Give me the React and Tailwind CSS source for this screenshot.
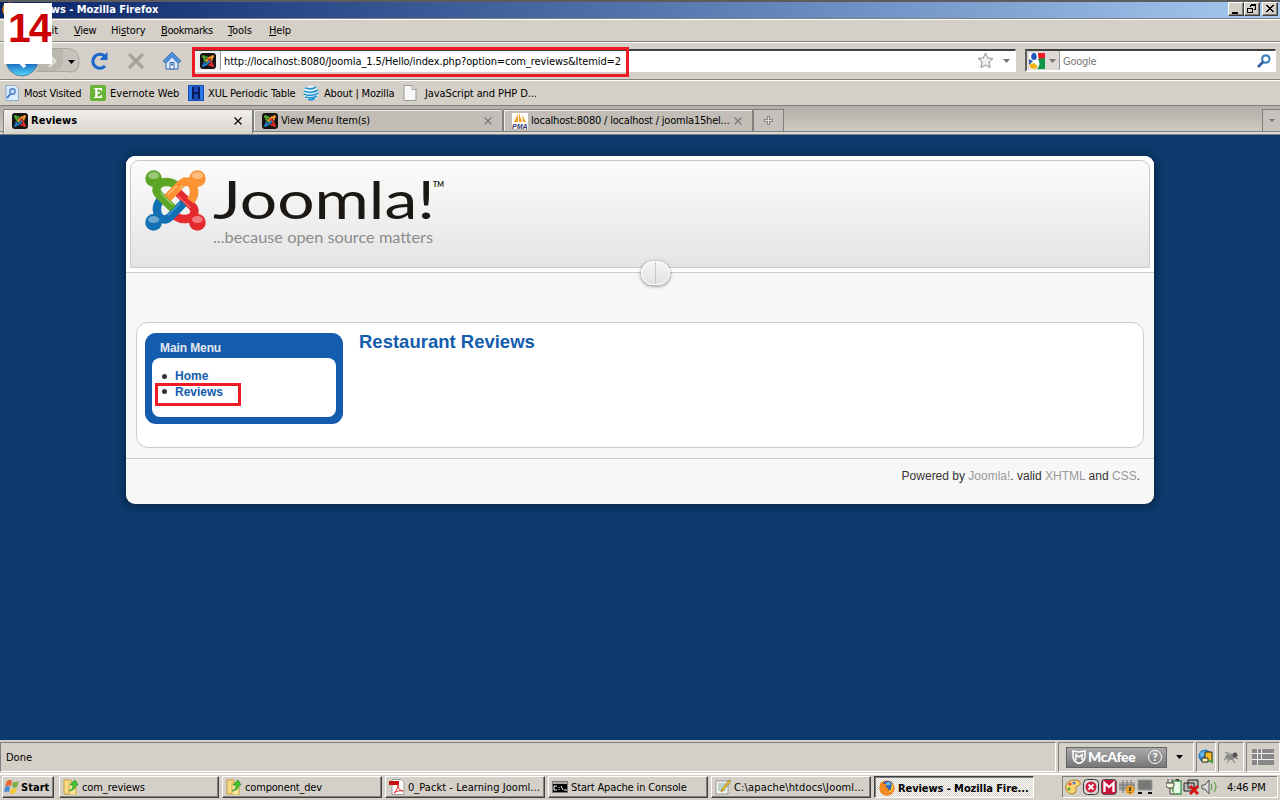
import React from "react";

const UI = "font-['DejaVu_Sans_Condensed','DejaVu_Sans',sans-serif] text-[11px] leading-[14px] text-black whitespace-nowrap";

function JoomlaMark({ className }) {
  const arm = "M31 15.500 L29 14 C23 10 11.500 12 11.500 19.500 C11.500 22.500 12.500 23.500 14.500 25.500 L28 38.500";
  const rot = ["rotate(180 30.500 30.500)", "rotate(270 30.500 30.500)", "rotate(0)", "rotate(90 30.500 30.500)"];
  const color = ["#e52a2e", "#1271b5", "#5ba626", "#fb9333"];
  const light = ["#f4625f", "#3f97d2", "#8ecb5e", "#ffbd78"];
  return (
    <svg viewBox="0 0 61 61" className={className}>
      {color.map((c, i) => (
        <g key={c} transform={rot[i]}>
          <path d="M8 8 L14 14" stroke={c} strokeWidth="10" />
          <path d={arm} fill="none" stroke={c} strokeWidth="8.500" />
          <path d="M15.500 23 L28 35" fill="none" stroke={light[i]} strokeWidth="1.500" />
          <circle cx="8.600" cy="8.600" r="8.300" fill={c} />
        </g>
      ))}
      <path d="M22.500 28 L33 17.500" stroke="#fb9333" strokeWidth="8.500" />
      <path d="M23 24.500 L32 15.500" stroke="#ffbd78" strokeWidth="1.500" />
      {[[8.6, 5.5], [52.4, 5.5], [8.6, 49.5], [52.4, 49.5]].map(([x, y]) => (
        <ellipse key={x + "-" + y} cx={x} cy={y} rx="5.500" ry="3.600" fill="#fff" opacity=".38" />
      ))}
    </svg>
  );
}

function JoomlaFavicon() {
  return (
    <svg viewBox="0 0 16 16" className="size-4 shrink-0">
      <rect width="16" height="16" rx="3" fill="#151515" />
      <g fill="none" strokeWidth="2">
        <path d="M7.500 4.500C5 3.500 4 5 4.300 6.200L8 10" stroke="#54a82a" />
        <path d="M11.500 7.500C12.500 5 11 4 9.800 4.300L6 8" stroke="#f79a2c" />
        <path d="M8.500 11.500C11 12.500 12 11 11.700 9.800L8 6" stroke="#e62c2c" />
        <path d="M4.500 8.500C3.500 11 5 12 6.200 11.700L10 8" stroke="#2377c4" />
      </g>
      <circle cx="3.500" cy="3.500" r="1.500" fill="#54a82a" />
      <circle cx="12.500" cy="3.500" r="1.500" fill="#f79a2c" />
      <circle cx="12.500" cy="12.500" r="1.500" fill="#e62c2c" />
      <circle cx="3.500" cy="12.500" r="1.500" fill="#2377c4" />
    </svg>
  );
}

function FirefoxIcon() {
  return (
    <svg viewBox="0 0 16 16" className="size-4 shrink-0">
      <circle cx="8" cy="8" r="7.500" fill="#e2651b" />
      <circle cx="8.800" cy="6.500" r="5.500" fill="#2d62b5" />
      <path d="M7 2.500c2-1 4-.5 5 1l-2 2-3-.5z" fill="#6fb4e8" />
      <path d="M1 4C2 3 2 2 2.500 1.500L5 4l3 .5L6.500 7l3 1.500C8 10.500 11 11 13 8c0-3 0-4-1-5 3 1.500 4 5 3 8-2 4-6 5.500-10 4S0 9 1 4z" fill="#f18a20" />
      <path d="M12.500 3c2 2 2 5 .5 7-1 2-3 2.500-5 2.500 3-.5 5-3 4.500-9.500z" fill="#fdd33c" />
    </svg>
  );
}

function Arrow({ className = "" }) {
  return <svg viewBox="0 0 7 4" className={"h-[4px] w-[7px] shrink-0 " + className}><path d="M0 0h7L3.500 4z" fill="currentColor" /></svg>;
}

function CloseX({ className }) {
  return <svg viewBox="0 0 8 8" className={"size-2 shrink-0 " + className}><path d="M.5.5l7 7M7.500.5l-7 7" stroke="currentColor" strokeWidth="1.150" /></svg>;
}

function WinButton({ children, className = "" }) {
  return <div className={"h-[14px] w-4 border border-t-white border-l-white border-r-[#404040] border-b-[#404040] bg-[#d4d0c8] shadow-[inset_-1px_-1px_#808080] " + className}><svg viewBox="0 0 14 12" className="h-3 w-[14px]" shapeRendering="crispEdges">{children}</svg></div>;
}

function TitleBar() {
  return (
    <div className="flex h-[18px] shrink-0 border-t-2 border-t-[#5c5c5c] bg-linear-to-r from-[#0a246a] to-[#a6caf0] pr-[2px]">
      <div className="w-4 shrink-0"><div className="ml-[2px] w-4"><FirefoxIcon /></div></div>
      <div className="flex-1 pt-px pl-1 font-['DejaVu_Sans_Condensed','DejaVu_Sans',sans-serif] text-[11px] leading-[13px] font-bold tracking-[-0.02px] whitespace-nowrap text-white">Reviews - Mozilla Firefox</div>
      <WinButton><path d="M3 9h6v2H3z" /></WinButton>
      <WinButton className="mr-[2px]">
        <path d="M5.500 1.500h5v5h-2M5.500 1.500v2M5 2.500h6M2.500 5.500h5v4h-5zM2 5.500h6" fill="none" stroke="#000" />
      </WinButton>
      <WinButton><path d="M3 2h2v1h1v1h2V3h1V2h2v1h-1v1H9v1H8v1h1v1h1v1h1v1H9V8H8V7H6v1H5v1H3V8h1V7h1V6h1V5H5V4H4V3H3z" /></WinButton>
    </div>
  );
}

function MenuBar() {
  return (
    <div className={UI + " flex h-[24px] shrink-0 items-center border-t border-b border-t-[#808080] border-b-[#808080] pt-[2px] pl-[39px] shadow-[inset_0_1px_#fff]"}>
      <span className="w-[35px]"><u>E</u>dit</span>
      <span className="w-[37px] tracking-[-0.3px]"><u>V</u>iew</span>
      <span className="w-[50px] tracking-[-0.1px]">Hi<u>s</u>tory</span>
      <span className="w-[67px] tracking-[-0.4px]"><u>B</u>ookmarks</span>
      <span className="w-[41px] tracking-[-0.1px]"><u>T</u>ools</span>
      <span className="tracking-[-0.2px]"><u>H</u>elp</span>
    </div>
  );
}

function GoogleIcon() {
  return (
    <svg viewBox="0 0 16 16" className="size-4 shrink-0">
      <rect width="16" height="16" fill="#fff" />
      <path d="M9 0h7v6H9z" fill="#ed1c24" /><path d="M9 6l7-1v11H8c3-3 3-6 1-10z" fill="#119547" />
      <path d="M0 6l4 2-4 4z" fill="#2a61bd" /><ellipse cx="5" cy="3.500" rx="2.800" ry="3.500" fill="#1d5abb" />
      <ellipse cx="4.500" cy="13" rx="4" ry="2.700" fill="#f4b315" /><path d="M8 0l1 6M6 9l2 3" stroke="#fff" strokeWidth="1.500" />
    </svg>
  );
}

function NavBar() {
  return (
    <div className="flex h-[38px] shrink-0 items-center border-b border-b-[#808080] shadow-[inset_0_1px_#fff]">
      <svg viewBox="0 0 82 36" className="h-9 w-[82px] shrink-0">
        <defs><linearGradient id="back" x2="0" y2="1"><stop stopColor="#3477bd" /><stop offset=".6" stopColor="#1769bd" /><stop offset="1" stopColor="#58dbff" /></linearGradient></defs>
        <path d="M12 5.500h55q12 0 12 13t-12 10H36" fill="#c8c4bd" stroke="#aaa69e" />
        <path d="M38 28h13q10 0 12-8V6H38z" fill="#b3b0ab" opacity=".7" />
        <circle cx="22" cy="17" r="16" fill="url(#back)" stroke="#58708a" strokeWidth=".8" />
        <path d="M25 11l-7 6 7 7" fill="none" stroke="#fff" strokeWidth="3.500" /><path d="M49 12l6 6-6 6" fill="none" stroke="#dedbd5" strokeWidth="3" />
        <path d="M68 17h7l-3.500 4z" fill="#000" />
      </svg>
      <svg viewBox="0 0 20 20" className="ml-2 size-5 shrink-0"><path d="M15 15A7 7 0 1 1 14.500 5" fill="none" stroke="#1b67ca" strokeWidth="3.200" /><path d="M17.500 1v8H9.500z" fill="#1b67ca" /></svg>
      <svg viewBox="0 0 18 18" className="ml-[17px] size-[18px] shrink-0"><path d="M2 2l14 14M16 2L2 16" stroke="#a5a29d" strokeWidth="3.200" /></svg>
      <svg viewBox="0 0 18 18" className="ml-[18px] size-[18px] shrink-0"><path d="M3 9v8h12V9L9 3z" fill="#dcecff" stroke="#3569ac" /><path d="M9 0L18 9l-1.500 1.500H14L9 5l-5 5.500H1.500L0 9z" fill="#4e8edb" stroke="#3566a5" strokeWidth=".7" /><path d="M7 10.500h4V17H7z" fill="#fff" stroke="#3569ac" /><path d="M8 11.500h2v2H8z" fill="#3569ac" /></svg>
      <div className={UI + " ml-[12px] flex h-[23px] w-[823px] shrink-0 items-center border-t-2 border-l border-b-2 border-r border-t-[#404040] border-l-[#808080] border-r-white border-b-white bg-white"}>
        <div className="flex h-full w-[27px] items-center border-r border-[#999] bg-[#f0efed] pl-[6px]"><JoomlaFavicon /></div>
        <span className="flex-1 pt-[2px] pl-[3px] tracking-[-0.095px]">http://localhost:8080/Joomla_1.5/Hello/index.php?option=com_reviews&amp;Itemid=2</span>
        <svg viewBox="0 0 17 17" className="size-[17px]"><path d="M8.500 1l2.200 5 5.300.5-4 3.500 1.200 5.500-4.700-2.300-4.700 2.300L5 10 1 6.500 6.300 6z" fill="#eee" stroke="#8f8f8f" /></svg>
        <Arrow className="mr-[5px] ml-[9px] text-[#777]" />
      </div>
      <div className={UI + " ml-[9px] flex h-[23px] w-[251px] shrink-0 items-center border-t-2 border-l-2 border-b-2 border-r border-t-[#404040] border-l-[#606060] border-r-white border-b-white bg-white"}>
        <div className="flex h-full w-[33px] items-center gap-1 border-r border-[#999] bg-[#dedbd6] pl-[2px]"><GoogleIcon /><Arrow className="text-[#777]" /></div>
        <span className="flex-1 pt-[2px] pl-[3px] tracking-[-0.25px] text-[#777]">Google</span>
        <svg viewBox="0 0 14 14" className="mr-1 size-[14px]"><circle cx="8.800" cy="5" r="3.700" fill="#fff" stroke="#3d7fbb" strokeWidth="2.200" /><path d="M6 8L1 13" stroke="#315f9e" strokeWidth="2.700" /></svg>
      </div>
    </div>
  );
}

function Bookmarks() {
  return (
    <div className={UI + " flex h-[26px] shrink-0 items-center border-b border-b-[#808080] pl-1 shadow-[inset_0_1px_#fff]"}>
      <svg viewBox="0 0 16 16" className="size-4"><path d="M2 .5h9L14.500 4v11.500H2z" fill="#dcecff" stroke="#8dacd2" /><circle cx="8.500" cy="6.500" r="2.700" fill="#c2dbfa" stroke="#4d83c4" strokeWidth="1.400" /><path d="M6.500 9L3 13" stroke="#4d83c4" strokeWidth="2" /></svg>
      <span className="ml-1 w-[66px] pt-[2px] tracking-[-0.25px]">Most Visited</span>
      <svg viewBox="0 0 16 16" className="size-4"><rect width="16" height="16" rx="2" fill="#68b536" /><path d="M4 3h8v3h-1L10 4.500H7.500V7H10v1.500H7.500v3H10l1-1.500h1v3H4v-1h1.200V4H4z" fill="#fff" /></svg>
      <span className="ml-1 w-[78px] pt-[2px] tracking-[0.03px]">Evernote Web</span>
      <svg viewBox="0 0 16 16" className="size-4"><path d="M0 0h16v16H0z" fill="#1c49b8" /><path d="M1 1h4v14H1zM11 1h4v14h-4z" fill="#2a78e4" /><path d="M5 2v12M11 2v12M5 8h6" stroke="#061a5c" strokeWidth="2" /></svg>
      <span className="ml-1 w-[95px] pt-[2px] tracking-[-0.15px]">XUL Periodic Table</span>
      <svg viewBox="0 0 16 16" className="size-4"><circle cx="8" cy="8" r="7.500" fill="#e9f5fb" /><path d="M2 3q7 2 11-1M1 6q8 3 14-1M.5 9q8 3 15-1M2 12q7 2 12-1M5 14.500q4 1 7-1" fill="none" stroke="#2796cd" strokeWidth="1.700" /></svg>
      <span className="ml-[5px] w-[78px] pt-[2px] tracking-[-0.17px]">About | Mozilla</span>
      <svg viewBox="0 0 16 16" className="size-4"><path d="M2 .5h8L14 4.500v11H2z" fill="#f8f8f8" stroke="#999" /><path d="M10 .5v4h4" fill="#ddd" stroke="#aaa" /></svg>
      <span className="ml-[7px] pt-[2px] tracking-[-0.1px]">JavaScript and PHP D...</span>
    </div>
  );
}

function Tab({ icon, label, active, spacing }) {
  return (
    <div className={UI + " mt-[3px] flex w-[250px] shrink-0 items-center rounded-t-[2px] border border-b-0 border-[#808080] pr-[10px] pl-[8px] shadow-[inset_1px_1px_#eeece8] " + (active ? "h-[25px] bg-linear-to-b from-[#f2f0ed] to-[#d8d4cd] pb-[3px] font-bold" : "h-[22px] bg-[#c2beb7]")}>
      {icon}<span className={"ml-[3px] flex-1 pt-px " + spacing}>{label}</span><CloseX className={active ? "text-black" : "text-[#777]"} />
    </div>
  );
}

function Tabs() {
  return (
    <div className="flex h-[29px] shrink-0 items-start bg-[linear-gradient(#b2aea7,#cdc8c0_25px,#808080_25px,#808080_26px,#dcd9d4_26px,#dcd9d4_28px,#808080_28px)] pl-[3px]">
      <Tab active icon={<JoomlaFavicon />} label="Reviews" spacing="tracking-[0.03px]" />
      <Tab icon={<JoomlaFavicon />} label="View Menu Item(s)" spacing="tracking-[-0.2px]" />
      <Tab icon={<svg viewBox="0 0 16 16" className="size-4 shrink-0"><path d="M0 0h16v16H0z" fill="#fff" /><path d="M2 9l4-8v8zM7 9V0l3 9zM10 2l4 7h-3z" fill="#f69b1c" /><text x="0" y="15.500" fontSize="7" fontWeight="bold" fontFamily="Liberation Sans" fontStyle="italic" textLength="15.500" lengthAdjust="spacingAndGlyphs" fill="#333366">PMA</text></svg>} label="localhost:8080 / localhost / joomla15hel..." spacing="tracking-[-0.2px]" />
      <div className="mt-[3px] flex h-[22px] w-[31px] items-center justify-center border border-b-0 border-[#808080] bg-[#c6c2bb]"><svg viewBox="0 0 9 9" className="size-[9px]"><path d="M4.500 0v9M0 4.500h9" stroke="#8a8a8a" strokeWidth="3" /><path d="M4.500 1v7M1 4.500h7" stroke="#ddd" /></svg></div>
      <div className="mt-[3px] ml-auto flex h-[22px] w-[18px] items-center justify-center border border-r-0 border-b-0 border-[#808080] bg-[#c6c2bb]"><svg viewBox="0 0 6 3" className="h-[3px] w-[6px] text-[#777]"><path d="M0 0h6L3 3z" fill="currentColor" /></svg></div>
    </div>
  );
}

function Site() {
  return (
    <main className="h-[605px] shrink-0 bg-[#0c3a6d] pt-[21px] font-['Liberation_Sans',sans-serif] text-[12px] leading-4 text-[#333]">
      <div className="mx-auto flex h-[348px] w-[1028px] flex-col overflow-hidden rounded-[9px] bg-[#f7f7f7] shadow-[0_1px_8px_3px_rgba(0,0,0,0.28)]">
        <header className="relative h-[117px] shrink-0 border-b border-[#ccc] bg-white p-1">
          <div className="flex h-[108px] items-start rounded-t-[9px] border border-[#c8c8cb] bg-linear-to-b from-[#fcfcfc] to-[#e4e4e4] pt-[9px] pl-[14px]">
            <JoomlaMark className="size-[61px]" />
            <svg viewBox="0 0 240 85" className="ml-1 h-[85px] w-[240px] overflow-visible">
              <text x="3" y="49" fontFamily="Lato" fontSize="53" fill="#1b1813" textLength="222" lengthAdjust="spacingAndGlyphs">Joomla!</text>
              <text x="223" y="16.500" fontFamily="Lato" fontWeight="bold" fontSize="7" fill="#1b1813" textLength="11" lengthAdjust="spacingAndGlyphs">TM</text>
              <text x="3" y="73" fontFamily="Lato" fontSize="15.500" fill="#8b8b8b" textLength="220" lengthAdjust="spacingAndGlyphs">...because open source matters</text>
            </svg>
          </div>
          <div className="absolute top-[105px] left-[515px] flex h-[24px] w-[29px] overflow-hidden rounded-full border border-white bg-linear-to-b from-[#f6f6f6] to-[#e2e2e2] shadow-[0_1px_3px_1px_rgba(0,0,0,0.3)]"><div className="w-[14px] border-r border-[#c8c8c8]" /></div>
        </header>
        <section className="mx-[10px] mt-[49px] flex h-[126px] shrink-0 rounded-[12px] border border-[#ccc] bg-white pt-[10px] pl-2">
          <nav className="h-[91px] w-[198px] rounded-[11px] bg-[#135cae] px-[7px] font-bold">
            <h3 className="h-[25px] pt-[7px] pl-2 tracking-[-0.1px] text-[#e4e8ee]">Main Menu</h3>
            <div className="relative h-[59px] rounded-[8px] bg-white pt-[10px] pl-[23px] text-[#135cae]">
              <ul>
                <li className="relative">Home<i className="absolute top-[6px] -left-[13px] size-[5px] rounded-full bg-[#333]" /></li>
                <li className="relative">Reviews<i className="absolute top-[5px] -left-[13px] size-[5px] rounded-full bg-[#333]" /></li>
              </ul>
              <div className="absolute top-[25px] left-[3px] h-[23px] w-[86px] border-3 border-[#ed1c24]" />
            </div>
          </nav>
          <h1 className="-mt-[2px] ml-4 text-[18.5px] leading-[22px] font-bold text-[#135cae]">Restaurant Reviews</h1>
        </section>
        <footer className="mt-[10px] flex-1 border-t border-[#ccc] pt-[9px] pr-[14px] text-right">Powered by <span className="text-[#999]">Joomla!</span>. valid <span className="text-[#999]">XHTML</span> and <span className="text-[#999]">CSS</span>.</footer>
      </div>
    </main>
  );
}

const INSET = "border border-t-[#808080] border-l-[#808080] border-r-white border-b-white";

function StatusBar() {
  return (
    <div className={UI + " flex h-[34px] shrink-0 gap-[2px] border-b border-white pt-[2px]"}>
      <div className={INSET + " flex h-[30px] w-[1056px] shrink-0 items-center pt-[2px] pl-[5px]"}>Done</div>
      <div className={INSET + " flex h-[30px] w-[136px] shrink-0 items-center pl-[7px]"}>
        <div className="flex h-[21px] w-[101px] shrink-0 items-center border border-[#666] bg-linear-to-b from-[#aaa] to-[#777] pl-[5px] font-[Lato,sans-serif] text-[14px] font-black text-white">
          <svg viewBox="0 0 14 14" className="size-[14px] shrink-0"><path d="M1 1l6 1 6-1v6q-1 5-6 6.500Q2 12 1 7z" fill="none" stroke="#fff" strokeWidth="1.500" /><path d="M4 10V4.500L7 7l3-2.500V10" fill="none" stroke="#fff" strokeWidth="1.500" /></svg>
          <span className="ml-[2px] tracking-[-0.3px]">McAfee</span>
          <span className="mr-1 ml-auto flex size-[14px] items-center justify-center rounded-full border border-white text-[11px]">?</span>
        </div>
        <Arrow className="ml-[9px]" />
      </div>
      <div className={INSET + " flex h-[30px] w-[20px] shrink-0 items-center justify-center"}><svg viewBox="0 0 16 16" className="size-4 shrink-0"><circle cx="7" cy="7" r="6.500" fill="#287bc4" /><path d="M2 4q5-4 9 0L3 9z" fill="#65b6ea" /><path d="M7 3h7v9H7z" fill="#f6bd22" stroke="#222" /><path d="M4 9h6v4H4z" fill="#fff0a2" stroke="#333" /><path d="M9 11h6v4z" fill="#4f9d3f" /></svg></div>
      <div className={INSET + " flex h-[30px] w-[26px] shrink-0 items-center justify-center"}><svg viewBox="0 0 16 16" className="size-4"><path d="M1 11l4-3M4 14l3-4M9 10l3 4M11 8l4 2" stroke="#777" /><ellipse cx="7" cy="8" rx="5" ry="3" fill="#888" /><circle cx="12" cy="6" r="2.500" fill="#555" /><path d="M7 7L2 3l7 2z" fill="#aaa" stroke="#777" strokeWidth=".5" /></svg></div>
      <div className={INSET + " flex h-[30px] w-[34px] shrink-0 items-center justify-center"}><svg viewBox="0 0 22 16" className="h-4 w-[22px]" shapeRendering="crispEdges"><path d="M0 0h22v16H0z" fill="#888" /><path d="M0 4.500h22M0 10.500h22M5.500 0v16M9.500 0v11" stroke="#eee" /></svg></div>
    </div>
  );
}

function TaskButton({ icon, children, active, spacing }) {
  return (
    <div className={UI + " flex h-[22px] w-[160px] shrink-0 items-center border " + (active ? "border-t-[#404040] border-l-[#404040] border-r-white border-b-white bg-[repeating-conic-gradient(#fff_0_25%,#d4d0c8_0_50%)] bg-[length:2px_2px] pt-[2px] pl-1 font-bold shadow-[inset_1px_1px_#808080]" : "border-t-white border-l-white border-r-[#404040] border-b-[#404040] pl-[3px] shadow-[inset_-1px_-1px_#808080]")}>
      {icon}<span className={"ml-[3px] pt-px " + spacing}>{children}</span>
    </div>
  );
}

function FolderIcon() {
  return <svg viewBox="0 0 16 16" className="size-4 shrink-0"><path d="M1 1h7v14H1z" fill="#f6dc86" stroke="#c89f3c" /><path d="M6 4h7v12H6z" fill="#fbe79d" stroke="#d0a94c" /><path d="M6 12q5-2 4-6H7l5-5 3 5h-2q0 5-7 6z" fill="#43c92f" stroke="#258c21" strokeWidth=".7" /></svg>;
}

function TaskBar() {
  return (
    <div className="flex h-[26px] shrink-0 items-start border-t border-white bg-[#d4d0c8] pt-px pl-[2px]">
      <div className={UI + " mr-[5px] flex h-[22px] w-[52px] items-center border border-t-white border-l-white border-r-[#404040] border-b-[#404040] pl-px font-bold shadow-[inset_-1px_-1px_#808080]"}>
        <svg viewBox="0 0 16 16" className="size-4 shrink-0"><path d="M3 2q3-2 5 0L7 7Q4 6 1 7z" fill="#e96232" /><path d="M9 3q3 1 6-1l-2 6q-3 2-5-1z" fill="#78ad3d" /><path d="M1 8q3-2 5 0l-1 5q-2-1-5 0z" fill="#4a8bd1" /><path d="M7 9q3 2 6 0l-2 5q-3 2-5 0z" fill="#f7c52e" /></svg>
        <span className="ml-px pt-px tracking-[0.05px]">Start</span>
      </div>
      <div className="flex gap-[3px]">
        <TaskButton icon={<FolderIcon />} spacing="tracking-[-0.1px]">com_reviews</TaskButton>
        <TaskButton icon={<FolderIcon />} spacing="tracking-[-0.17px]">component_dev</TaskButton>
        <TaskButton icon={<svg viewBox="0 0 16 16" className="size-4 shrink-0"><path d="M3 .5h9l3 3v12H3z" fill="#fff" stroke="#999" /><path d="M0 2h10v4H0z" fill="#c41212" /><path d="M5 14c3-3 4-6 4-8 0 4 3 6 5 6-3-1-6 0-9 2z" fill="none" stroke="#e22" /></svg>} spacing="tracking-[0.05px]">0_Packt - Learning Jooml...</TaskButton>
        <TaskButton icon={<svg viewBox="0 0 16 16" className="size-4 shrink-0"><path d="M.5 2.500h15v11H.5z" fill="#000" stroke="#777" /><path d="M1 3h14v2H1z" fill="#aaa" /><path d="M5 7H2v4h3M7 8v1M7 10v1M9 7l2 4M12 11h3" fill="none" stroke="#fff" /></svg>} spacing="tracking-[-0.14px]">Start Apache in Console</TaskButton>
        <TaskButton icon={<svg viewBox="0 0 16 16" className="size-4 shrink-0"><path d="M1 2h12v13H1z" fill="#f4f8f2" stroke="#999" /><path d="M3 5h8M3 7h7M3 9h5M3 11h8" stroke="#8bb0a0" /><path d="M14 1l2 1-8 10-2 1 .5-2.500z" fill="#f3c62e" stroke="#75602c" strokeWidth=".6" /></svg>} spacing="tracking-[0.15px]">C:\apache\htdocs\Jooml...</TaskButton>
        <TaskButton active icon={<FirefoxIcon />} spacing="tracking-[-0.08px]">Reviews - Mozilla Fire...</TaskButton>
      </div>
      <div className={UI + " " + INSET + " mr-[2px] ml-auto flex h-[22px] w-[216px] items-center pl-[2px]"}>
        <svg viewBox="0 0 88 16" className="h-4 w-[88px] shrink-0">
          <path d="M1 10C-1 3 8-1 14 2c3 3 0 5-2 5s0 4-2 7c-4 2-8 0-9-4z" fill="#f9d56c" stroke="#a97b2b" /><circle cx="5" cy="5" r="1.500" fill="#e44" /><circle cx="9" cy="4" r="1.500" fill="#4a7de0" /><circle cx="4" cy="10" r="1.500" fill="#4a4" />
          <rect x="18.500" y=".5" width="15" height="15" rx="4" fill="#ddd" stroke="#333" /><circle cx="26" cy="8" r="5.500" fill="#cf1d3c" /><path d="M23.500 5.500l5 5M28.500 5.500l-5 5" stroke="#fff" strokeWidth="1.800" />
          <rect x="36.500" y=".5" width="15" height="15" rx="3" fill="#c8143c" stroke="#555" /><path d="M39.500 13V4l4.500 4 4.500-4v9" fill="none" stroke="#fff" strokeWidth="2.300" />
          <path d="M54 3h16v9H54z" fill="#aaa" /><path d="M54 6h16M54 9h16M58 1v13M62 1v13M66 1v13" stroke="#777" /><circle cx="65" cy="11" r="4.500" fill="#eba126" /><path d="M65 8v4M65 13v1" stroke="#333" strokeWidth="1.500" />
          <path d="M73 1h14v10H73z" fill="#777" stroke="#999" /><path d="M73 14h4M83 14h4" stroke="#111" strokeWidth="2" />
        </svg>
        <svg viewBox="0 0 52 16" className="ml-[13px] h-4 w-[52px] shrink-0">
          <path d="M7 2h8v13H7z" fill="#e7fbe6" stroke="#40944a" strokeWidth="1.300" /><path d="M9.500.500h3v1.500" stroke="#333" /><path d="M2 0v4M6 0v4" stroke="#555" /><path d="M0 4h8v3L6 9H2L0 7zM4 9v6h4" fill="#f6f6d8" stroke="#444" />
          <path d="M22 1h10v8H22zM18 4h10v8H18z" fill="#bbb" stroke="#222" /><path d="M24 7l8 8M32 7l-8 8" stroke="#d81515" strokeWidth="3" />
          <path d="M36 6h3l4-5v14l-4-5h-3z" fill="#ddd" stroke="#555" /><path d="M45 5q2 3 0 6M48 3q4 5 0 10" fill="none" stroke="#38952f" />
        </svg>
        <span className="ml-[9px] pt-px tracking-[-0.2px]">4:46 PM</span>
      </div>
    </div>
  );
}

export default function App() {
  return (
    <div className="relative flex h-[800px] w-[1280px] flex-col overflow-hidden bg-[#d4d0c8]">
      <TitleBar />
      <MenuBar />
      <NavBar />
      <Bookmarks />
      <Tabs />
      <Site />
      <StatusBar />
      <TaskBar />
      <div className="absolute top-[47px] left-[192px] h-[30px] w-[437px] border-3 border-[#ed1c24]" />
      <div className="absolute top-[3px] left-1 h-[61px] w-12 bg-white pl-[4px] font-['Liberation_Sans',sans-serif] text-[41px] leading-[51px] font-bold tracking-[-2px] text-[#cc0000]">14</div>
    </div>
  );
}
